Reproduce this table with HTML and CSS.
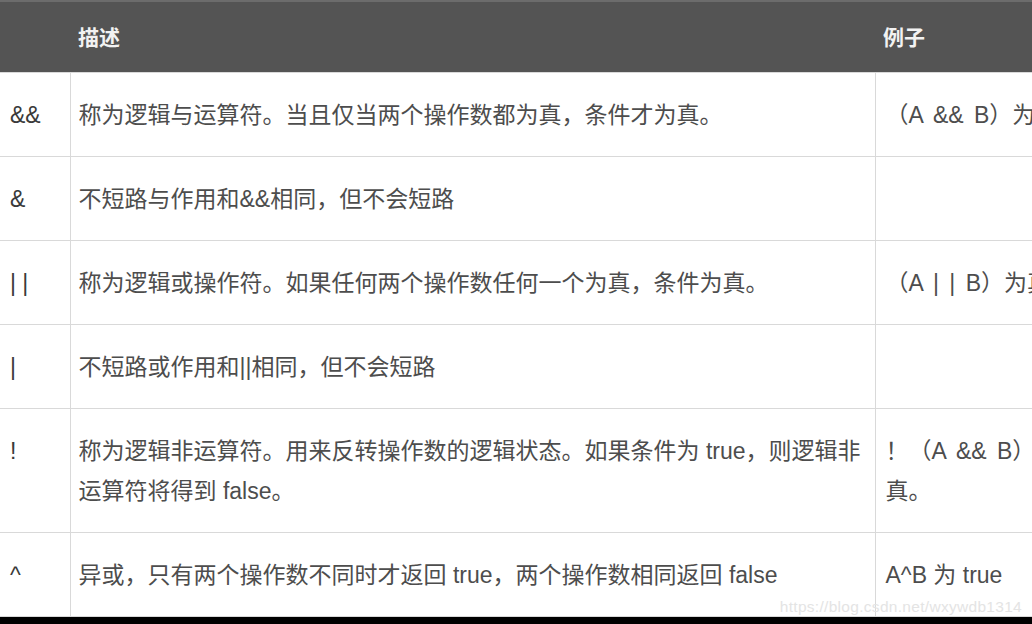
FILE: index.html
```html
<!DOCTYPE html>
<html lang="zh-CN">
<head>
  <meta charset="UTF-8" />
  <meta name="viewport" content="width=device-width, initial-scale=1.0" />
  <title>逻辑运算符</title>
  <link rel="stylesheet" href="styles.css">
</head>
<body>
  <div class="page">
    <table class="ops">
      <colgroup>
        <col class="col-op">
        <col class="col-desc">
        <col class="col-ex">
      </colgroup>
      <thead>
        <tr>
          <th class="op"></th>
          <th class="desc">描述</th>
          <th class="ex">例子</th>
        </tr>
      </thead>
      <tbody>
        <tr>
          <td class="op">&amp;&amp;</td>
          <td class="desc">称为逻辑与运算符。当且仅当两个操作数都为真，条件才为真。</td>
          <td class="ex expr">（A &amp;&amp; B）为假</td>
        </tr>
        <tr>
          <td class="op">&amp;</td>
          <td class="desc">不短路与作用和&amp;&amp;相同，但不会短路</td>
          <td class="ex"></td>
        </tr>
        <tr>
          <td class="op">| |</td>
          <td class="desc">称为逻辑或操作符。如果任何两个操作数任何一个为真，条件为真。</td>
          <td class="ex expr">（A | | B）为真</td>
        </tr>
        <tr>
          <td class="op">|</td>
          <td class="desc">不短路或作用和||相同，但不会短路</td>
          <td class="ex"></td>
        </tr>
        <tr>
          <td class="op">!</td>
          <td class="desc">称为逻辑非运算符。用来反转操作数的逻辑状态。如果条件为 true，则逻辑非运算符将得到 false。</td>
          <td class="ex expr">！（A &amp;&amp; B）为真。</td>
        </tr>
        <tr>
          <td class="op">^</td>
          <td class="desc">异或，只有两个操作数不同时才返回 true，两个操作数相同返回 false</td>
          <td class="ex">A^B 为 true</td>
        </tr>
      </tbody>
    </table>
    <div class="watermark">https://blog.csdn.net/wxywdb1314</div>
  </div>
</body>
</html>
```

FILE: styles.css
```css
html, body {
  margin: 0;
  padding: 0;
  background: #000;
}
body {
  font-family: 'Liberation Sans', 'Noto Sans CJK SC', sans-serif;
  color: #4d4d4d;
}
.page {
  position: relative;
  width: 1032px;
  height: 624px;
  overflow: hidden;
  background: #000;
}
.ops {
  table-layout: fixed;
  width: 1085px;
  border-collapse: collapse;
  background: #fff;
}
.col-op {
  width: 70px;
}
.col-desc {
  width: 805px;
}
.col-ex {
  width: 210px;
}
thead tr {
  background: #545454;
  border-top: 2px solid #6c6c6c;
}
th {
  text-align: left;
  color: #f2f2f2;
  font-weight: bold;
  font-size: 21px;
  line-height: 40px;
  padding: 16px 9px 14px;
}
td {
  font-size: 23px;
  line-height: 40px;
  padding: 22px 9px 21px;
  vertical-align: top;
  border: 1px solid #d9d9d9;
  word-break: break-all;
}
td.op {
  padding-left: 10px;
  border-left: none;
  color: #3a3a3a;
}
.desc {
  padding-left: 8px;
}
td.ex {
  padding-left: 10px;
}
td.expr {
  word-spacing: 4px;
}
th.ex {
  padding-left: 8px;
}
.watermark {
  position: absolute;
  right: 10px;
  bottom: 8px;
  font-size: 15.5px;
  color: #e4e4e4;
  letter-spacing: 0.3px;
}
```
